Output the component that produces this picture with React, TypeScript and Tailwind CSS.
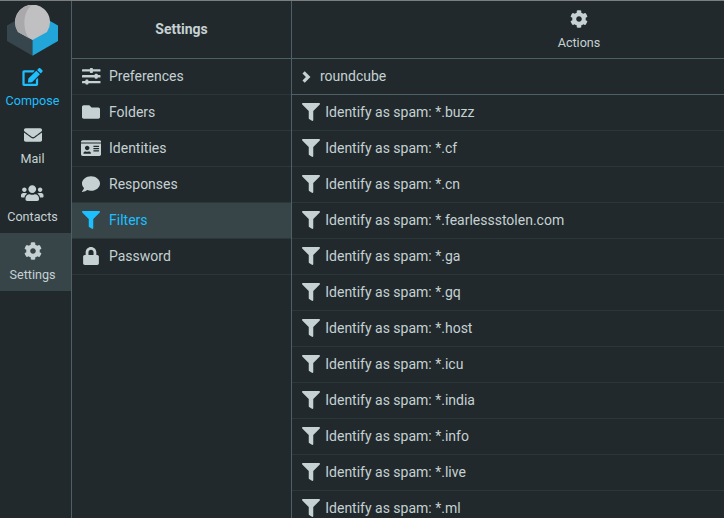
import type { ReactNode } from "react";
import {
  FaCog,
  FaComment,
  FaEdit,
  FaEnvelope,
  FaFilter,
  FaFolder,
  FaIdCard,
  FaLock,
  FaUsers,
} from "react-icons/fa";

type Icon = (props: { className?: string }) => ReactNode;

function Sliders({ className }: { className?: string }) {
  return (
    <svg viewBox="0 0 18 18" className={className} fill="currentColor">
      <rect x="0" y="2.200" width="18.500" height="2.400" rx=".6" />
      <rect x="0" y="8.100" width="18.500" height="2.400" rx=".6" />
      <rect x="0" y="13.900" width="18.500" height="2.400" rx=".6" />
      <rect x="7.900" y="1" width="3" height="5" rx=".8" />
      <rect x="12.700" y="6.800" width="3" height="5" rx=".8" />
      <rect x="3.400" y="12.600" width="3" height="5" rx=".8" />
    </svg>
  );
}

function Chevron({ className }: { className?: string }) {
  return (
    <svg viewBox="0 0 11 18" className={className} fill="none" stroke="currentColor" strokeWidth="3.200">
      <path d="M2.600 4.400 7.200 9l-4.600 4.600" />
    </svg>
  );
}

function Logo() {
  return (
    <svg viewBox="0 0 52 52" className="h-[52px] w-[52px]">
      <path d="M0 20.500 25.500 6v44.700L0 36z" fill="#37464d" />
      <path d="M51 20.500 25.500 6v44.700L51 36z" fill="#22a5d8" />
      <path d="M25.500 35 11 26.900A17.500 17.500 0 1 1 40 26.900z" fill="#c0c0c2" />
      <path d="M25.500 35 11 26.900A17.500 17.500 0 0 1 25.500 0C16 5 15 24 22 33z" fill="#a9a9ac" />
    </svg>
  );
}

const tasks: { label: string; icon: Icon; tone: string; size: string }[] = [
  { label: "Compose", icon: FaEdit, tone: "text-[#1dbfff]", size: "w-[21px]" },
  { label: "Mail", icon: FaEnvelope, tone: "", size: "w-[18px]" },
  { label: "Contacts", icon: FaUsers, tone: "", size: "w-[22.5px]" },
  { label: "Settings", icon: FaCog, tone: "bg-[#374549]", size: "w-[18px]" },
];

const sections: { label: string; icon: Icon; tone: string; size: string }[] = [
  { label: "Preferences", icon: Sliders, tone: "", size: "w-[18px] overflow-visible" },
  { label: "Folders", icon: FaFolder, tone: "", size: "w-[18px]" },
  { label: "Identities", icon: FaIdCard, tone: "", size: "w-[20.25px]" },
  { label: "Responses", icon: FaComment, tone: "", size: "w-[18px]" },
  { label: "Filters", icon: FaFilter, tone: "bg-[#374549] text-[#1dbfff]", size: "w-[18px]" },
  { label: "Password", icon: FaLock, tone: "", size: "w-[18px]" },
];

const domains = [
  "buzz", "cf", "cn", "fearlessstolen.com", "ga", "gq",
  "host", "icu", "india", "info", "live", "ml",
];

export default function App() {
  return (
    <div className="flex h-[518px] w-[724px] overflow-hidden border-t border-[#7b7e7f] bg-[#21292c] font-[Roboto,sans-serif] text-[14px] leading-[21px] text-[#c5d1d3]">
      <nav className="flex w-[72px] shrink-0 flex-col border-r border-[#4d6066] text-[12.6px]">
        <div className="h-[58px] pl-[7px] pt-1">
          <Logo />
        </div>
        {tasks.map(({ label, icon: TaskIcon, tone, size }) => (
          <a key={label} className={`flex h-[58px] flex-col items-center pr-1.5 pt-[9px] ${tone}`}>
            <TaskIcon className={`h-[18px] shrink-0 ${size}`} />
            <span className="mt-[5px] leading-5">{label}</span>
          </a>
        ))}
      </nav>

      <section className="flex w-[220px] shrink-0 flex-col border-r border-[#4d6066]">
        <h1 className="flex h-[58px] shrink-0 items-center justify-center border-b border-[#4d6066] font-bold">
          Settings
        </h1>
        <ul>
          {sections.map(({ label, icon: SectionIcon, tone, size }) => (
            <li key={label} className={`flex h-9 items-center border-b border-[#2c373a] pl-2 ${tone}`}>
              <span className="flex w-[22px] shrink-0 justify-center pb-px">
                <SectionIcon className={`h-[18px] shrink-0 ${size}`} />
              </span>
              <span className="whitespace-nowrap pl-[7px]">{label}</span>
            </li>
          ))}
        </ul>
      </section>

      <main className="flex min-w-0 flex-1 flex-col">
        <header className="flex h-[58px] shrink-0 flex-col items-center border-b border-[#4d6066] pl-[142px] pt-[9px] text-[12.6px]">
          <FaCog size={18} />
          <span className="mt-[5px] leading-5">Actions</span>
        </header>
        <div className="flex h-9 shrink-0 items-center border-b border-[#4d6066] pl-[9px]">
          <Chevron className="h-[18px] w-[11px]" />
          <span className="pl-2">roundcube</span>
        </div>
        <ul>
          {domains.map((domain) => (
            <li key={domain} className="flex h-9 items-center border-b border-[#2c373a] pl-2.5">
              <FaFilter size={18} className="mb-px" />
              <span className="whitespace-nowrap pl-[5.25px]">Identify as spam: *.{domain}</span>
            </li>
          ))}
        </ul>
      </main>
    </div>
  );
}
